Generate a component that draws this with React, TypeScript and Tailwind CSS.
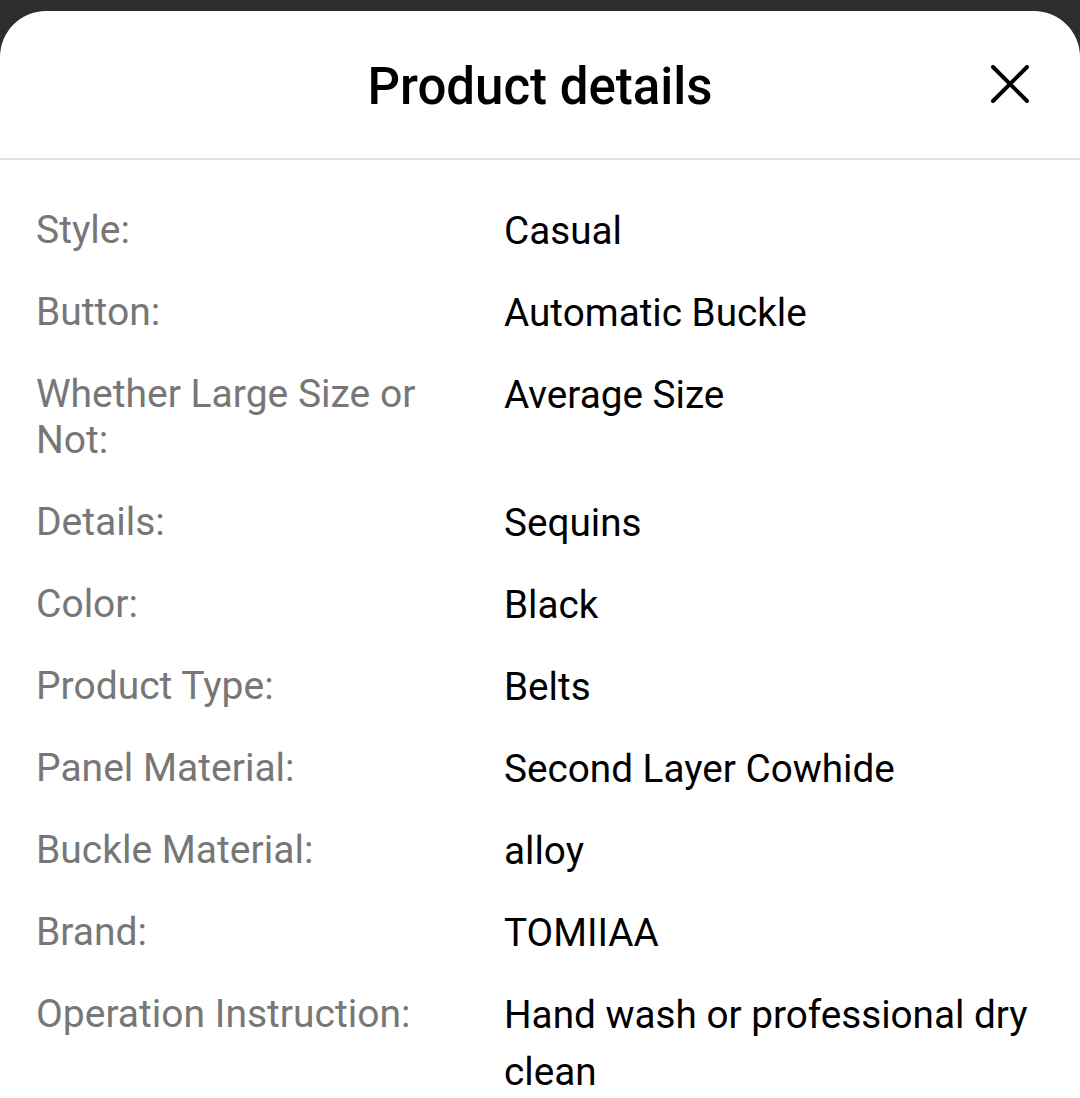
import React from "react";

const rows: [string, string][] = [
  ["Style:", "Casual"],
  ["Button:", "Automatic Buckle"],
  ["Whether Large Size or Not:", "Average Size"],
  ["Details:", "Sequins"],
  ["Color:", "Black"],
  ["Product Type:", "Belts"],
  ["Panel Material:", "Second Layer Cowhide"],
  ["Buckle Material:", "alloy"],
  ["Brand:", "TOMIIAA"],
  ["Operation Instruction:", "Hand wash or professional dry clean"],
];

export default function App() {
  return (
    <div
      className="w-[1080px] h-[1098px] bg-[#2e2e2e] pt-[11px] overflow-hidden"
      style={{ fontFamily: "Roboto, 'Noto Sans', sans-serif" }}
    >
      <div className="bg-white rounded-t-[46px] h-full">
        <div className="relative h-[149px] flex items-center justify-center border-b-2 border-[#e0e0e0]">
          <h1 className="text-[51px] font-medium text-black leading-none mt-[4px]">Product details</h1>
          <button className="absolute right-[51px] top-[54px] w-[38px] h-[38px] flex items-center justify-center">
            <svg width="38" height="38" viewBox="0 0 38 38" fill="none">
              <path d="M2 2 L36 36 M36 2 L2 36" stroke="#000" strokeWidth="4" strokeLinecap="round" />
            </svg>
          </button>
        </div>
        <div className="pt-[29px] px-[36px]">
          {rows.map(([k, v]) => (
            <div key={k} className="flex items-start py-[12.5px]">
              <div className="w-[441px] mr-[27px] shrink-0 text-[39px] leading-[46px] py-[5.5px] text-[#777777]">
                {k}
              </div>
              <div className="flex-1 text-[38.7px] leading-[57px] text-black">{v}</div>
            </div>
          ))}
        </div>
      </div>
    </div>
  );
}
